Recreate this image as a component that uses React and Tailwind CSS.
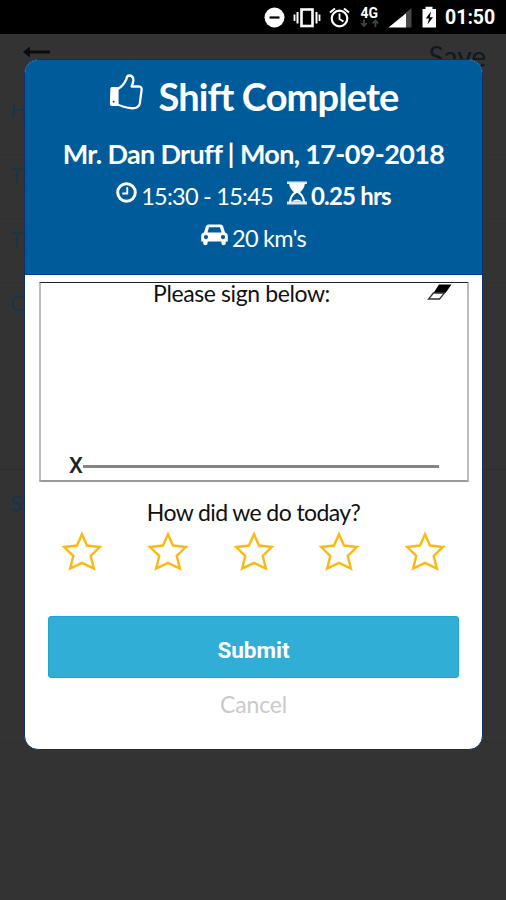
import React, { useState } from "react";

const ThumbIcon = () => (
  <svg width="34" height="36" viewBox="0 0 34 36" fill="none">
    <path d="M2 14.500Q2 13.500 3 13.500H9V31.500H3Q1.500 31.500 1.500 30Z" fill="#fff" stroke="#fff" strokeWidth="1.200" />
    <circle cx="4.600" cy="27.800" r="1" fill="#005b9b" />
    <path
      d="M9.500 14.500Q14.500 11.500 17.300 5.200Q17.700 1.500 20.500 1.500Q24.800 2 24.300 7Q23.800 10 22.600 12.500H30.500Q33 13.200 32.600 16L30.800 29.500Q29.800 33.500 25 34.200Q19.500 34.500 14 32.500Q11.500 31.500 9.500 31"
      stroke="#fff"
      strokeWidth="2.300"
      strokeLinecap="round"
      strokeLinejoin="round"
    />
  </svg>
);

const ClockIcon = () => (
  <svg width="21" height="21" viewBox="0 0 20 20" fill="none" stroke="#fff">
    <circle cx="10" cy="10" r="8.400" strokeWidth="2.800" />
    <path d="M10.700 5V11H6" strokeWidth="1.800" />
  </svg>
);

const HourglassIcon = () => (
  <svg width="20" height="24" viewBox="0 0 20 24" fill="#fff">
    <path d="M0 .5H20V3H0ZM0 20.500H20V23.500H0Z" opacity=".85" />
    <path d="M2 2H18Q17.500 8 12 12H8Q2.500 8 2 2Z" />
    <path d="M9 11Q3.500 14 3 21.500M11 11Q16.500 14 17 21.500" fill="none" stroke="#fff" strokeWidth="2" />
    <path d="M5 20.500Q7 18.500 10 18.500T15 20.500Z" />
  </svg>
);

const CarIcon = () => (
  <svg width="27" height="22" viewBox="0 0 27 22" fill="#fff">
    <path
      fillRule="evenodd"
      d="M7.500 .5H19.500Q21.500 .5 22.200 2.500L24 8.500Q26.800 9 26.800 12V17.500H24.800V19Q24.800 21.300 22.600 21.300T20.400 19V17.500H6.600V19Q6.600 21.300 4.400 21.300T2.200 19V17.500H.2V12Q.2 9 3 8.500L4.800 2.500Q5.500 .5 7.500 .5ZM8 3.200L6.500 8.400H20.500L19 3.200ZM5 11A2.100 2.100 0 1 0 5 15.200A2.100 2.100 0 1 0 5 11ZM22 11A2.100 2.100 0 1 0 22 15.200A2.100 2.100 0 1 0 22 11Z"
    />
  </svg>
);

const EraserIcon = () => (
  <svg width="26" height="18" viewBox="0 0 26 18">
    <path d="M12 1.500H24.500L18.500 10H6.500Z" fill="#000" />
    <path d="M6.500 10H17.500L12.500 16H1.500Z" fill="#fff" stroke="#333" strokeWidth="1.300" />
  </svg>
);

const StarIcon = ({ filled }) => (
  <svg width="42" height="42" viewBox="0 0 40 40">
    <path
      d="M20 4L24.800 14.800L37 16.200L28.300 24.600L31.300 36.800L20 31.300L8.700 36.800L11.700 24.600L3 16.200L15.200 14.800Z"
      fill={filled ? "#fdb813" : "none"}
      stroke="#fdb813"
      strokeWidth="2.300"
    />
  </svg>
);

function StatusBar() {
  return (
    <div className="flex h-[34px] items-center bg-black pl-[264px] text-white">
      <svg width="180" height="30" viewBox="264 2 180 30" fill="none">
        <circle cx="274.500" cy="17.500" r="10" fill="#fff" />
        <path d="M269.500 17.500H279.500" stroke="#000" strokeWidth="2.200" />
        <rect x="301.500" y="9.500" width="11" height="16.500" stroke="#fff" strokeWidth="2.600" />
        <path d="M297.500 12V23.500M316.500 12V23.500" stroke="#fff" strokeWidth="2" />
        <path d="M294.500 14.500V21M319.500 14.500V21" stroke="#fff" strokeWidth="1.800" />
        <circle cx="339.500" cy="18.500" r="7.800" stroke="#fff" strokeWidth="2.200" />
        <path d="M339.500 13.500V19L343.500 21.500" stroke="#fff" strokeWidth="1.800" />
        <path d="M330 12.500L335 8.500M349 12.500L344 8.500" stroke="#fff" strokeWidth="2" />
        <text x="360.500" y="17.500" fill="#fff" fontFamily="Roboto" fontWeight="700" fontSize="14">
          4G
        </text>
        <path d="M364 19.500V26M361.200 23L364 26L366.800 23M375.500 27V20.500M372.700 23.500L375.500 20.500L378.300 23.500" stroke="#444" strokeWidth="1.800" />
        <path d="M406 13.200V27.500H388.500Z" fill="#fff" />
        <path d="M406 12.500L411.500 8V27.500H406Z" fill="#484848" />
        <path d="M422.500 9H425.500V6.800H432.500V9H436V27.500H422.500Z" fill="#fff" />
        <path d="M431 11.500L425.800 18.500H429L427.500 24.500L433 17.200H429.800Z" fill="#000" />
      </svg>
      <span className="ml-[1px] mt-[2px] font-[Roboto] text-[19.500px] font-bold leading-none">01:50</span>
    </div>
  );
}

/* the form that stays dimmed behind the dialog */
function ShiftForm() {
  return (
    <div className="flex flex-1 flex-col text-[22px] leading-7 text-[#1b3445]">
      <div className="flex h-[56px] justify-between pl-[22px] pr-5 pt-2">
        <svg width="28" height="18" viewBox="0 0 28 18" className="mt-[1px]">
          <path d="M1 9L8 3.500V14.500Z" fill="#0c0c0c" />
          <path d="M6 9H28" stroke="#0c0c0c" strokeWidth="3" />
        </svg>
        <span className="text-[28px] text-[#101820]">Save</span>
      </div>
      <div className="h-[65px] border-b border-[#303030] pl-[10px] pt-[6px]">Hours</div>
      <div className="h-[64px] border-b border-[#303030] pl-[10px] pt-[6px]">Time In</div>
      <div className="h-[64px] border-b border-[#303030] pl-[10px] pt-[6px]">Time Out</div>
      <div className="h-[187px] border-b border-[#2c2c2c] pl-[10px] pt-[6px]">Comments</div>
      <div className="h-[273px] border-b border-[#303030] pl-[10px] pt-5 font-bold">Signature</div>
    </div>
  );
}

function App() {
  const [rating, setRating] = useState(0);

  return (
    <div className="relative flex h-[900px] w-[506px] flex-col overflow-hidden bg-[#333333] font-[Lato,sans-serif]">
      <StatusBar />
      <ShiftForm />

      <div className="absolute left-[24px] top-[59px] flex h-[691px] w-[459px] flex-col overflow-hidden rounded-[14px] border border-[#0b2f66] bg-white">
        <header className="flex h-[215px] flex-col items-center border-b border-[#003f88] bg-[#005b9b] text-white">
          <div className="mt-[14px] flex h-12 items-start gap-4">
            <ThumbIcon />
            <h1 className="-mt-[2px] whitespace-nowrap text-[38px] font-bold leading-[48px] tracking-[-0.9px]">Shift Complete</h1>
          </div>
          <h2 className="mt-[14px] whitespace-nowrap text-[27px] font-bold leading-9 tracking-[-0.65px]">
            Mr. Dan Druff | Mon, 17-09-2018
          </h2>
          <div className="mt-[6px] flex h-9 items-center text-[23.500px] leading-9">
            <span className="mb-2"><ClockIcon /></span>
            <span className="ml-[4px] tracking-[-0.75px]">15:30 - 15:45</span>
            <span className="mb-[6px] ml-[14px]"><HourglassIcon /></span>
            <span className="ml-1 text-[24px] font-bold tracking-[-0.8px]">0.25 hrs</span>
          </div>
          <div className="mt-[6px] flex h-9 items-center text-[23.500px] leading-9">
            <span className="mb-[6px]"><CarIcon /></span>
            <span className="ml-[4px] tracking-[-0.75px]">20 km's</span>
          </div>
        </header>

        <section className="ml-[14px] mr-[13px] mt-[7px] flex h-[200px] flex-col justify-between border-2 border-t border-[#bdbdbd] border-t-[#222] border-b-[#999]">
          <div className="flex justify-between pr-[14px]">
            <span className="w-[15px]" />
            <p className="-mt-1 text-[23px] leading-7 tracking-[-0.4px] text-[#111]">Please sign below:</p>
            <button onClick={() => setRating(0)} className="h-[18px]"><EraserIcon /></button>
          </div>
          <div className="mb-[2px] flex items-center pl-[28px] pr-[28px]">
            <span className="font-[Roboto] text-[22px] font-medium leading-6 text-[#222]">X</span>
            <span className="h-[3px] flex-1 bg-[#858585]" />
          </div>
        </section>

        <p className="mt-[16px] text-center text-[23px] leading-7 tracking-[-0.6px] text-[#111]">How did we do today?</p>
        <div className="mt-[4px] flex justify-between px-[36px]">
          {[1, 2, 3, 4, 5].map((star) => (
            <button key={star} onClick={() => setRating(star)}>
              <StarIcon filled={star <= rating} />
            </button>
          ))}
        </div>

        <button className="ml-[23px] mr-[23px] mt-[44px] h-[62px] shrink-0 rounded-[3px] border border-[#1ba6d0] bg-[#30aed6] pt-2 font-[Roboto] text-[22.500px] font-bold text-white">
          Submit
        </button>
        <button className="mt-[10px] text-[23px] leading-8 tracking-[-0.2px] text-[#cacaca]">Cancel</button>
      </div>
    </div>
  );
}

export default App;
